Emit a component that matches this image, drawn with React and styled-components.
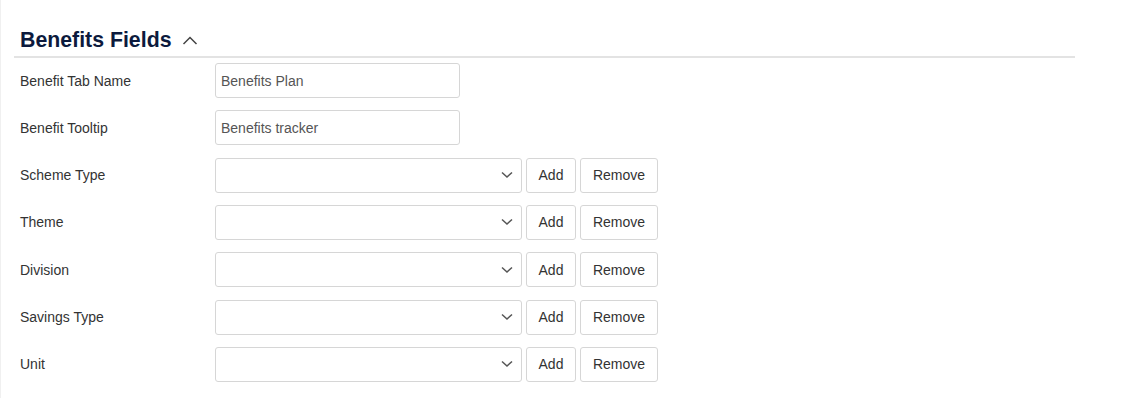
import React from 'react'
import styled, { createGlobalStyle } from 'styled-components'

const GlobalStyle = createGlobalStyle`
    body {
        margin: 0;
        background: #fff;
        font-family: Arial, "Liberation Sans", sans-serif;
    }
`;

const Page = styled.div`
    width: 1122px;
    height: 398px;
    box-sizing: border-box;
    padding: 25px 0 0 13px;
    border-left: 1px solid #f0f0f0;
`;

const Header = styled.div`
    width: 1061px;
    height: 33px;
    border-bottom: 2px solid #e3e3e3;
    display: flex;
    align-items: center;
    padding-left: 6px;
    box-sizing: border-box;
    gap: 11px;
`;

const Title = styled.h2`
    margin: 0;
    font-size: 21.3px;
    font-weight: bold;
    color: #0c1a3d;
`;

const Form = styled.div`
    display: flex;
    flex-direction: column;
    gap: 12.33px;
    padding: 5px 0 0 6px;
`;

const Row = styled.div`
    display: flex;
    align-items: center;
    height: 35px;
`;

const Label = styled.label`
    width: 195px;
    font-size: 14px;
    color: #333;
`;

const TextInput = styled.input`
    width: 245px;
    height: 35px;
    box-sizing: border-box;
    border: 1px solid #d6d6d6;
    border-radius: 3px;
    padding: 0 5px;
    font-family: Arial, "Liberation Sans", sans-serif;
    font-size: 14px;
    color: #555;
    outline: none;
`;

const SelectBox = styled.div`
    width: 307px;
    height: 35px;
    box-sizing: border-box;
    border: 1px solid #d6d6d6;
    border-radius: 3px;
    display: flex;
    align-items: center;
    justify-content: flex-end;
    padding-right: 8px;
`;

const Button = styled.button`
    height: 35px;
    width: ${p => p.$w}px;
    margin-left: 4px;
    box-sizing: border-box;
    background: #fff;
    border: 1px solid #d6d6d6;
    border-radius: 3px;
    font-family: Arial, "Liberation Sans", sans-serif;
    font-size: 14px;
    color: #333;
    padding: 0;
`;

const ChevronUp = () => (
    <svg width="16" height="11" viewBox="0 0 16 11">
        <path d="M1.5 9 L8 2.5 L14.5 9" fill="none" stroke="#444" strokeWidth="1.5" />
    </svg>
);

const ChevronDown = () => (
    <svg width="12" height="8" viewBox="0 0 12 8">
        <path d="M1 1.5 L6 6 L11 1.5" fill="none" stroke="#555" strokeWidth="1.5" />
    </svg>
);

const selects = ['Scheme Type', 'Theme', 'Division', 'Savings Type', 'Unit'];

export default function App() {
    return (
        <Page>
            <GlobalStyle />
            <Header>
                <Title>Benefits Fields</Title>
                <ChevronUp />
            </Header>
            <Form>
                <Row>
                    <Label>Benefit Tab Name</Label>
                    <TextInput defaultValue="Benefits Plan" />
                </Row>
                <Row>
                    <Label>Benefit Tooltip</Label>
                    <TextInput defaultValue="Benefits tracker" />
                </Row>
                {selects.map(name => (
                    <Row key={name}>
                        <Label>{name}</Label>
                        <SelectBox><ChevronDown /></SelectBox>
                        <Button $w={50}>Add</Button>
                        <Button $w={78}>Remove</Button>
                    </Row>
                ))}
            </Form>
        </Page>
    );
}
